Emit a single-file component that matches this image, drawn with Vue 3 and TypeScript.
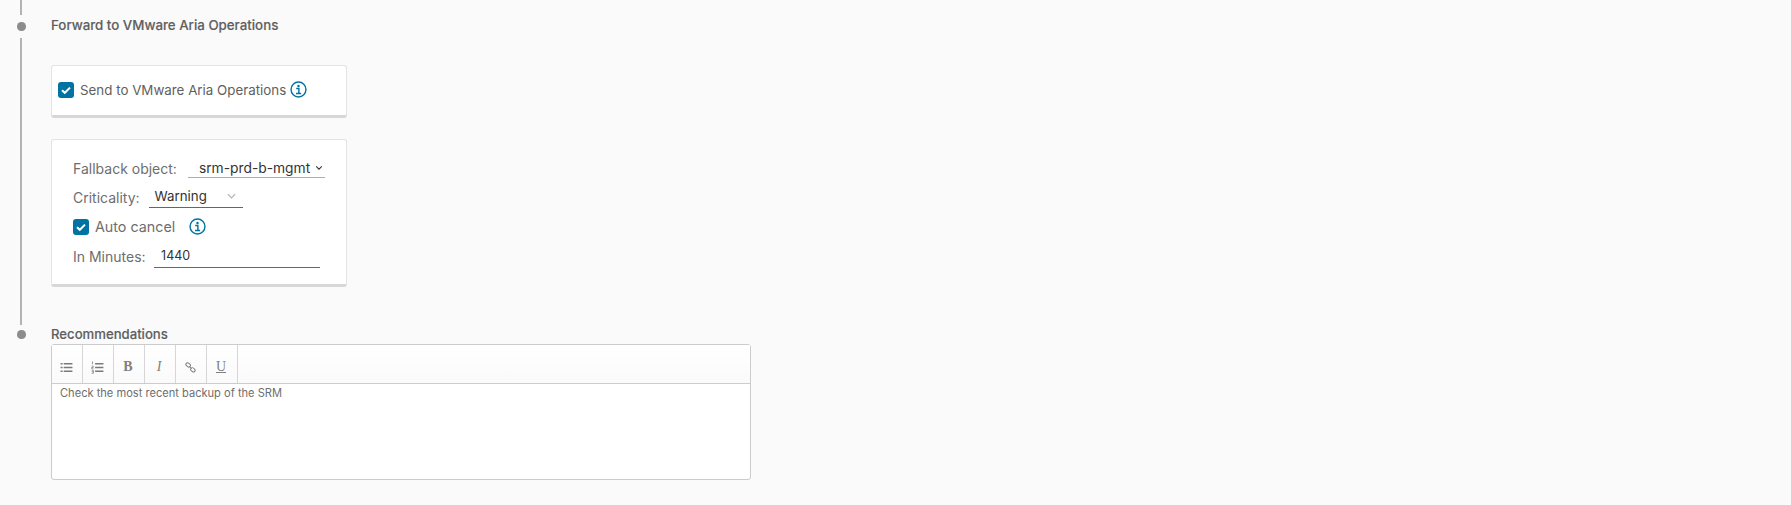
<script setup lang="ts">
const tools = ['ul', 'ol', 'b', 'i', 'link', 'u'];
</script>

<template>
  <div class="page">
    <div class="stub"></div>
    <section class="step head-step">
      <span class="dot"></span>
      <h3 class="title">Forward to VMware Aria Operations</h3>
    </section>
    <div class="rail-body">
      <div class="card card-send">
        <label class="check-row">
          <span class="checkbox"><svg viewBox="0 0 16 16"><path d="M4 8.2l2.8 2.6L12 5.6" /></svg></span>
          <span class="check-label">Send to VMware Aria Operations</span>
          <svg class="info" viewBox="0 0 18 18"><circle cx="9" cy="9" r="7.9" /><circle class="fill" cx="9" cy="5.2" r="1.3" /><path d="M6.6 8h2.8v5M6.4 13.2h5.4" /></svg>
        </label>
      </div>
      <div class="card card-form">
        <div class="row row-fallback">
          <span class="label">Fallback object:</span>
          <span class="select select-object">srm-prd-b-mgmt<svg class="chev" viewBox="0 0 10 6"><path d="M1.5 1l3.5 3.5L8.5 1" /></svg></span>
        </div>
        <div class="row row-crit">
          <span class="label">Criticality:</span>
          <span class="select select-crit">Warning<svg class="chev light" viewBox="0 0 10 6"><path d="M1 1l4 4 4-4" /></svg></span>
        </div>
        <div class="row row-auto">
          <span class="checkbox"><svg viewBox="0 0 16 16"><path d="M4 8.2l2.8 2.6L12 5.6" /></svg></span>
          <span class="label auto">Auto cancel</span>
          <svg class="info" viewBox="0 0 18 18"><circle cx="9" cy="9" r="7.9" /><circle class="fill" cx="9" cy="5.2" r="1.3" /><path d="M6.6 8h2.8v5M6.4 13.2h5.4" /></svg>
        </div>
        <div class="row row-min">
          <span class="label">In Minutes:</span>
          <span class="input">1440</span>
        </div>
      </div>
    </div>
    <section class="step rec-step">
      <span class="dot"></span>
      <h3 class="title">Recommendations</h3>
    </section>
    <div class="editor">
      <div class="toolbar">
        <span v-for="t in tools" :key="t" class="tool">
          <svg v-if="t === 'ul'" viewBox="0 0 14 14"><path class="thick" d="M0.6 3h2.2M0.6 7h2.2M0.6 11h2.2M4 3h9.4M4 7h9.4M4 11h9.4" /></svg>
          <svg v-else-if="t === 'ol'" viewBox="0 0 14 14"><path class="thin" d="M1.6 0.5v3M0.8 5.5h1.6v1.5H0.8v1.4h1.8M0.8 10h1.8v3.2H0.8M0.8 11.6h1.6" /><path class="thick" d="M4.4 3h9M4.4 7h9M4.4 11h9" /></svg>
          <span v-else-if="t === 'b'" class="glyph bold">B</span>
          <span v-else-if="t === 'i'" class="glyph ital">I</span>
          <svg v-else-if="t === 'link'" class="link" viewBox="0 0 14 14"><rect x="0.9" y="1.6" width="6.2" height="4.2" rx="2.1" transform="rotate(40 4 3.7)" /><rect x="6.9" y="7.8" width="6.2" height="4.2" rx="2.1" transform="rotate(40 10 9.9)" /><path d="M5.6 5.4l2.8 3" /></svg>
          <span v-else class="glyph under">U</span>
        </span>
      </div>
      <div class="content">Check the most recent backup of the SRM</div>
    </div>
  </div>
</template>

<style scoped>
.page {
  position: relative;
  width: 1791px;
  height: 505px;
  overflow: hidden;
  background: #fafafa;
  font-family: Inter, "Liberation Sans", sans-serif;
  color: #565656;
  box-sizing: border-box;
  padding-left: 51px;
}
.page::before {
  content: "";
  position: absolute;
  left: 20px;
  top: 38px;
  width: 2px;
  height: 287px;
  background: #b3b3b3;
}
.stub {
  position: absolute;
  left: 20px;
  top: 0;
  width: 2px;
  height: 15px;
  background: #b3b3b3;
}
.step {
  position: relative;
  display: flex;
  align-items: center;
  height: 18px;
}
.head-step {
  margin-top: 16px;
}
.rec-step {
  margin-top: 38px;
}
.dot {
  position: absolute;
  left: -34px;
  top: 5px;
  width: 8.5px;
  height: 8.5px;
  border-radius: 50%;
  background: #8c8c8c;
}
.head-step .dot {
  top: 6px;
}
.title {
  margin: 0;
  font-size: 13.3px;
  font-weight: 500;
  -webkit-text-stroke: 0.15px #666;
  line-height: 18px;
  color: #5f5f5f;
}
.rec-step .title {
  font-size: 13.15px;
}
.rail-body {
  padding-top: 31px;
  display: flex;
  flex-direction: column;
  gap: 21px;
}
.card {
  width: 296px;
  box-sizing: border-box;
  background: #fff;
  border: 1px solid #e3e3e3;
  border-bottom: 3px solid #d7d7d7;
  border-radius: 3px;
}
.card-send {
  height: 53px;
  padding: 0 6px 2px;
  display: flex;
  align-items: center;
}
.check-row {
  display: flex;
  align-items: center;
  font-size: 13.35px;
}
.checkbox {
  flex: none;
  width: 16px;
  height: 16px;
  border-radius: 3px;
  background: #0072a3;
  display: inline-flex;
  align-items: center;
  justify-content: center;
}
.checkbox svg {
  width: 16px;
  height: 16px;
  fill: none;
  stroke: #fff;
  stroke-width: 2;
}
.check-label {
  margin-left: 6px;
  margin-right: 4px;
  color: #5f5f5f;
  white-space: nowrap;
}
.info {
  flex: none;
  width: 17px;
  height: 17px;
  fill: none;
  stroke: #0072a3;
  stroke-width: 1.5;
}
.info .fill {
  fill: #0072a3;
  stroke: none;
}
.card-form {
  height: 148px;
  padding: 14px 21px 0;
}
.row {
  display: flex;
  align-items: center;
  font-size: 14px;
}
.label {
  color: #6e6e6e;
  white-space: nowrap;
}
.row-fallback {
  height: 29px;
  gap: 11px;
}
.row-crit {
  height: 29px;
  gap: 9px;
}
.row-auto {
  height: 29px;
}
.row-min {
  height: 30px;
  gap: 8.5px;
}
.auto {
  margin-left: 6px;
  margin-right: 14px;
  font-size: 14.3px;
}
.select {
  display: inline-flex;
  align-items: center;
  box-sizing: border-box;
  color: #333;
  white-space: nowrap;
}
.select-object {
  width: 137px;
  height: 19px;
  padding-left: 11px;
  padding-right: 2px;
  border-bottom: 1px solid #adadad;
  justify-content: space-between;
  font-size: 13.8px;
}
.select-crit {
  width: 94px;
  height: 20px;
  padding: 0 7px 3px 6px;
  border-bottom: 1px solid #666;
  justify-content: space-between;
  font-size: 13.3px;
}
.chev {
  width: 8px;
  height: 6px;
  fill: none;
  stroke: #333;
  stroke-width: 1.3;
}
.chev.light {
  stroke: #b0b0b0;
  width: 9px;
}
.input {
  display: inline-block;
  width: 166px;
  height: 22px;
  margin-top: 2px;
  line-height: 20px;
  box-sizing: border-box;
  padding-left: 7px;
  border-bottom: 1px solid #666;
  font-size: 12.5px;
  color: #333;
}
.editor {
  width: 700px;
  height: 136px;
  box-sizing: border-box;
  margin-top: 1px;
  background: #fff;
  border: 1px solid #ccc;
  border-radius: 3px;
}
.toolbar {
  display: flex;
  height: 38px;
  border-bottom: 1px solid #ccc;
  background: linear-gradient(#fff, #fafafa);
}
.tool {
  width: 31px;
  box-sizing: border-box;
  padding-top: 6px;
  padding-right: 2px;
  border-right: 1px solid #d6d6d6;
  display: flex;
  align-items: center;
  justify-content: center;
}
.tool svg {
  width: 13px;
  height: 13px;
  fill: none;
  stroke: #7a7a7a;
  stroke-width: 1.2;
}
.tool svg.link {
  width: 11px;
  height: 11px;
}
.tool .thick {
  stroke-width: 1.6;
}
.tool .thin {
  stroke-width: 0.8;
}
.glyph {
  font-family: "Liberation Serif", serif;
  font-size: 14px;
  color: #808080;
}
.glyph.bold {
  font-weight: 700;
}
.glyph.ital {
  font-style: italic;
}
.glyph.under {
  text-decoration: underline;
}
.content {
  padding: 2px 8px;
  font-size: 11.1px;
  line-height: 15px;
  color: #6e6e6e;
}
</style>
